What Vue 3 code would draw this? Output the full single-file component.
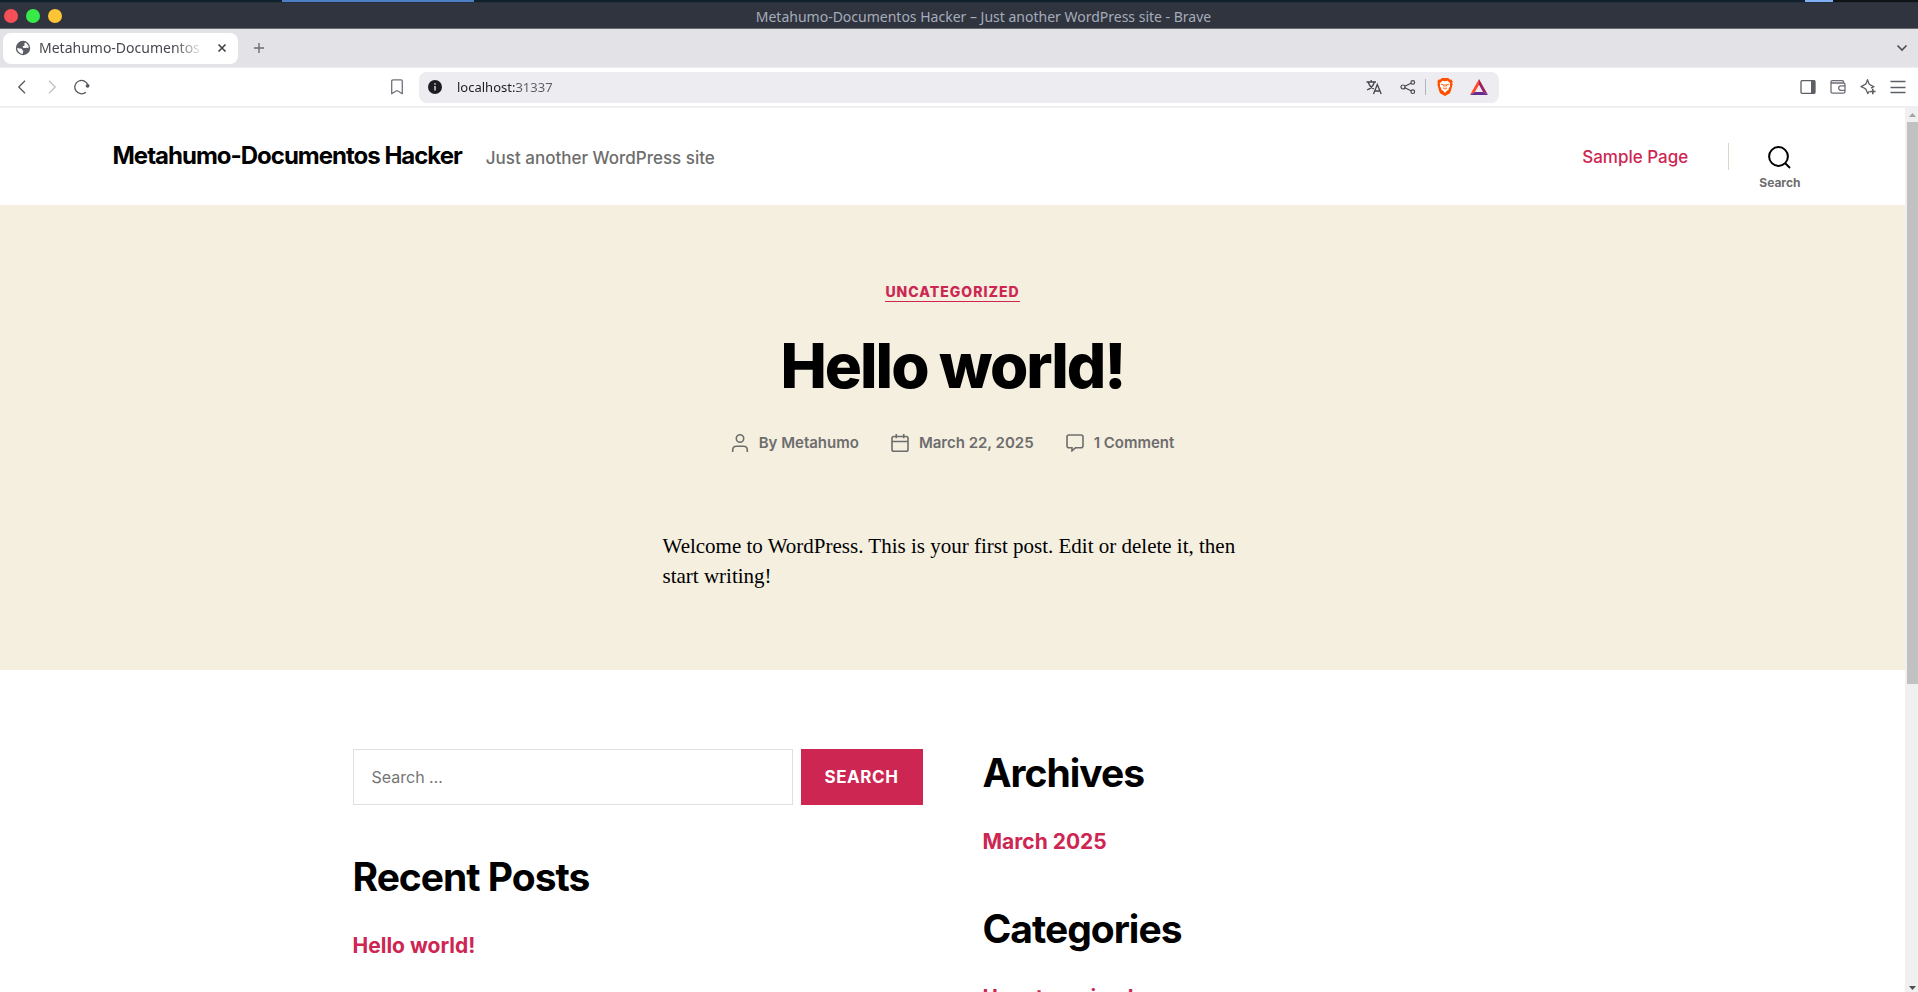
<script setup>
import { ref } from 'vue'

const url = ref('localhost:31337')
const query = ref('')
const meta = [
  { icon: 'user', text: 'By Metahumo' },
  { icon: 'calendar', text: 'March 22, 2025' },
  { icon: 'comment', text: '1 Comment' },
]
const sideWidgets = [
  { title: 'Archives', link: 'March 2025' },
  { title: 'Categories', link: 'Uncategorized' },
]
</script>

<template>
  <div class="window">
    <div class="desk"><i class="desk-active"></i><i class="desk-gap"></i><i class="desk-tag"></i><i class="desk-end"></i></div>
    <header class="titlebar">
      <div class="lights">
        <button class="light red" aria-label="Close window"></button>
        <button class="light green" aria-label="Maximize window"></button>
        <button class="light yellow" aria-label="Minimize window"></button>
      </div>
      <span class="window-title">Metahumo-Documentos Hacker – Just another WordPress site - Brave</span>
    </header>

    <div class="tabstrip">
      <div class="tab">
        <svg width="16" height="16" viewBox="0 0 16 16">
          <circle cx="8" cy="8" r="7.2" fill="#5a5d63" />
          <path d="M2.200 7.700c1.200.1 1.700.7 2.700.8 1.700.1 2.600.4 2.500 1.700.9.300 1.100.8.800 1.400-.3.800-.4 1.300-.2 2.200C4.800 13.800 2.100 11.200 2.200 7.700zM10.100 2.600c1.900.8 3.400 2.700 3.700 4.700-.8.800-1.400.7-2.300.5-1.300-.2-1.700.5-2.900.1C7.600 7.500 7.400 6.500 8.200 6c.5-.3 1.400-.1 1.600-.8-.6-.6-.8-1.700.3-2.600z" fill="#fff" />
        </svg>
        <span class="tab-title">Metahumo-Documentos</span>
        <button class="icon-btn tab-close" aria-label="Close tab">
          <svg width="10" height="10" viewBox="0 0 10 10"><path d="M1.500 1.500l7 7m0-7l-7 7" stroke="#44464c" stroke-width="1.700" /></svg>
        </button>
      </div>
      <button class="icon-btn new-tab" aria-label="New tab">
        <svg width="12" height="12" viewBox="0 0 12 12"><path d="M6 1v10M1 6h10" stroke="#6c6d74" stroke-width="1.400" /></svg>
      </button>
      <button class="icon-btn tab-menu" aria-label="Search tabs">
        <svg width="12" height="8" viewBox="0 0 12 8"><path d="M1.500 1.500L6 6l4.500-4.500" fill="none" stroke="#4c4e56" stroke-width="1.600" /></svg>
      </button>
    </div>

    <nav class="toolbar">
      <div class="tools-left">
        <button class="icon-btn" aria-label="Back">
          <svg width="16" height="16" viewBox="0 0 16 16"><path d="M11 1.800L4.800 8l6.200 6.200" fill="none" stroke="#55585f" stroke-width="1.300" /></svg>
        </button>
        <button class="icon-btn" aria-label="Forward">
          <svg width="16" height="16" viewBox="0 0 16 16"><path d="M5 1.800L11.200 8 5 14.200" fill="none" stroke="#bfc0c4" stroke-width="1.300" /></svg>
        </button>
        <button class="icon-btn" aria-label="Reload">
          <svg width="16" height="16" viewBox="0 0 16 16"><path d="M11.900 13.200A6.700 6.700 0 1 1 14 6.300" fill="none" stroke="#55585f" stroke-width="1.300" /><circle cx="13.600" cy="6.800" r="1.900" fill="#55585f" /></svg>
        </button>
        <button class="icon-btn bookmark" aria-label="Bookmark this page">
          <svg width="16" height="16" viewBox="0 0 16 16"><path d="M2.700 2.200c0-.8.500-1.300 1.300-1.300h8c.8 0 1.300.5 1.300 1.300v12.500L8.900 12q-.9-.7-1.800 0l-4.400 2.700z" fill="none" stroke="#6f727a" stroke-width="1.300" stroke-linejoin="round" /></svg>
        </button>
      </div>
      <div class="address">
        <button class="icon-btn" aria-label="Site information">
          <svg width="16" height="16" viewBox="0 0 16 16"><circle cx="8" cy="8" r="7" fill="#1d1c22" /><path d="M8 7v4.500M8 4.200v1.500" stroke="#d5d5da" stroke-width="1.500" /></svg>
        </button>
        <input v-model="url" class="url" type="text" aria-label="Address" />
        <button class="icon-btn" aria-label="Translate">
          <svg width="16" height="16" viewBox="0 0 16 16" fill="none" stroke="#44464e" stroke-width="1.300"><path d="M.5 3h9.500M5.200 1v2M2.300 3c.6 3 2.800 5.500 5.500 7M8.300 3C7.600 6.300 4.500 9.500 1 11M7.500 15L11.300 5.500 15.200 15M8.800 12h5" /></svg>
        </button>
        <button class="icon-btn share" aria-label="Share">
          <svg width="16" height="16" viewBox="0 0 16 16" fill="none" stroke="#44464e" stroke-width="1.200"><circle cx="3" cy="8" r="2" /><circle cx="12.800" cy="3.400" r="1.800" /><circle cx="12.800" cy="12.700" r="1.800" /><path d="M4.800 7.200L11 4.200M4.800 8.800l6.200 3" /></svg>
        </button>
        <i class="address-sep"></i>
        <button class="icon-btn" aria-label="Brave Shields">
          <svg width="16" height="18" viewBox="0 0 16 18">
            <path d="M4.800 0h6.400l1.600 1.600 1.600-.2 1.300 2-.5 1.500.4 1.600-2 7.200c-.3 1-.8 1.500-1.500 2L8 18l-4.100-2.300c-.7-.5-1.200-1-1.500-2L.4 6.500l.4-1.600-.5-1.500 1.300-2 1.600.2z" fill="#ff5000" />
            <path d="M8 3.300l2.500-.5 2.700 2.500-.4 1.600.4 1-1.500 2.500-.2 1.500-1.700.9L8 14.900l-1.800-2.100-1.700-.9-.2-1.500-1.500-2.500.4-1-.4-1.600 2.700-2.500z" fill="#fff" />
            <path d="M4 6.200l2.600.6-.4 1.500M12 6.200l-2.600.6.4 1.500M8 6v3.400M6 9.800l2 1.300 2-1.300" fill="none" stroke="#ff5000" stroke-width=".9" />
          </svg>
        </button>
        <button class="icon-btn rewards" aria-label="Brave Rewards">
          <svg width="18" height="16" viewBox="0 0 18 16">
            <path d="M9 0L0 16l4.900-3L9 5.800z" fill="#ff4724" />
            <path d="M9 0l9 16-4.900-3L9 5.800z" fill="#9e1f63" />
            <path d="M0 16h18l-4.900-3H4.900z" fill="#662d91" />
          </svg>
        </button>
      </div>
      <div class="tools-right">
        <button class="icon-btn" aria-label="Sidebar">
          <svg width="16" height="16" viewBox="0 0 16 16"><rect x="1" y="1.700" width="14" height="12.600" rx="1" fill="none" stroke="#5c5f66" stroke-width="1.300" /><path d="M11 1.500h4v13h-4z" fill="#5c5f66" /></svg>
        </button>
        <button class="icon-btn" aria-label="Wallet">
          <svg width="16" height="16" viewBox="0 0 16 16" fill="none" stroke="#6b6e75" stroke-width="1.300"><path d="M13.500 4V2.800c0-.7-.4-1.200-1.200-1.200H2.500C1.500 1.600 1 2.200 1 3v9.500c0 1 .7 1.700 1.700 1.700h10.600c1 0 1.700-.7 1.700-1.700V5.700C15 4.600 14.400 4 13.300 4H2.500C1.500 4 1 3.700 1 3M15 6.800h-4a2.300 2.300 0 0 0 0 4.600h4" /></svg>
        </button>
        <button class="icon-btn" aria-label="Leo AI">
          <svg width="16" height="16" viewBox="0 0 16 16" fill="none" stroke="#5c5f66" stroke-width="1.300" stroke-linejoin="round"><path d="M9.500 12.200L7.800 14.500 6 10.500C5.600 9.700 5 9.300 1 7.600 5 5.900 5.600 5.500 6.200 4.400L7.500.7l1.400 3.700c.4 1 1 1.500 5 3.200l-2.900 1.500" /><path d="M12.800 9.700v5.600M10 12.500h5.600" stroke-width="1.600" /></svg>
        </button>
        <button class="icon-btn" aria-label="Menu">
          <svg width="16" height="16" viewBox="0 0 16 16"><path d="M.5 2.500h15M.5 8.500h15M.5 13.500h15" stroke="#5c5f66" stroke-width="1.300" /></svg>
        </button>
      </div>
    </nav>

    <div class="viewport">
      <div class="page">
        <header class="site-header">
          <div class="header-inner">
            <div class="titles">
              <a class="site-title" href="#">Metahumo-Documentos Hacker</a>
              <span class="tagline">Just another WordPress site</span>
            </div>
            <div class="header-nav">
              <a class="nav-link" href="#">Sample Page</a>
              <i class="nav-sep"></i>
              <button class="search-toggle">
                <svg width="23" height="23" viewBox="0 0 23 23" fill="none" stroke="#000" stroke-width="2"><circle cx="10.500" cy="10.500" r="9.400" /><path d="M17 17l5 5" /></svg>
                <span>Search</span>
              </button>
            </div>
          </div>
        </header>

        <article class="post">
          <a class="category" href="#">Uncategorized</a>
          <h1>Hello world!</h1>
          <ul class="meta">
            <li v-for="m in meta" :key="m.icon">
              <svg v-if="m.icon === 'user'" width="18" height="18" viewBox="0 0 18 18"><circle cx="9" cy="4.500" r="3.700" /><path d="M1.700 18v-2c0-2.200 1.500-3.700 3.700-3.700h7.200c2.200 0 3.700 1.500 3.700 3.700v2" /></svg>
              <svg v-else-if="m.icon === 'calendar'" width="18" height="18" viewBox="0 0 18 18"><rect x="1" y="2.500" width="16" height="14.700" rx="1.800" /><path d="M1 7.500h16M5.300 0v4.200M12.700 0v4.200" /></svg>
              <svg v-else width="18" height="18" viewBox="0 0 18 18"><path d="M3 1h12c1.200 0 2 .8 2 2v8.800c0 1.200-.8 2-2 2H9.500L6 16.800v-3H3c-1.200 0-2-.8-2-2V3c0-1.200.8-2 2-2z" /></svg>
              <a href="#">{{ m.text }}</a>
            </li>
          </ul>
          <p>Welcome to WordPress. This is your first post. Edit or delete it, then start writing!</p>
        </article>

        <div class="widgets">
          <div class="column">
            <form class="search-form" @submit.prevent>
              <input v-model="query" type="search" placeholder="Search …" aria-label="Search for" />
              <button type="submit">Search</button>
            </form>
            <section>
              <h2>Recent Posts</h2>
              <a href="#">Hello world!</a>
            </section>
          </div>
          <div class="column">
            <section v-for="w in sideWidgets" :key="w.title">
              <h2>{{ w.title }}</h2>
              <a href="#">{{ w.link }}</a>
            </section>
          </div>
        </div>
      </div>
      <div class="scrollbar">
        <svg width="11" height="14" viewBox="0 0 11 14"><path d="M2 9l3.500-4L9 9z" fill="#a3a3a3" /></svg>
        <i class="thumb"></i>
        <i class="track"></i>
        <svg width="11" height="14" viewBox="0 0 11 14"><path d="M2 8l3.500 4L9 8z" fill="#505050" /></svg>
      </div>
    </div>
  </div>
</template>

<style>
body { margin: 0; overflow: hidden; }
</style>

<style scoped>
* { box-sizing: border-box; }
.window { height: 100vh; display: flex; flex-direction: column; background: #fff; font-family: "Noto Sans", sans-serif; overflow: hidden; }
button { font: inherit; color: inherit; border: 0; padding: 0; background: none; cursor: pointer; }
a { color: #cd2653; text-decoration: none; }
svg { display: block; flex: none; }

.desk { height: 3px; flex: none; display: flex; background: #12202e; border-bottom: 1px solid #26303d; }
.desk-active { width: 10%; margin-left: 282px; background: #4d7fc4; }
.desk-gap { flex: 1; }
.desk-tag { width: 28px; background: #7fb0f5; }
.desk-end { width: 85px; background: #101216; }

.titlebar { height: 26px; flex: none; display: grid; grid-template-columns: 1fr auto 1fr; align-items: center; padding: 0 4px; background: #30343f; border-bottom: 1px solid #6b6a74; }
.lights { display: flex; gap: 8px; }
.light { width: 14px; height: 14px; border-radius: 50%; }
.red { background: #f74f58; }
.green { background: #38ea49; }
.yellow { background: #fdc536; }
.window-title { grid-column: 2; padding: 2px 0 0 49px; font-size: 14px; line-height: 20px; color: #a5adbb; white-space: nowrap; }

.tabstrip { height: 39px; flex: none; display: flex; align-items: center; padding: 0 10px 0 3px; background: #e3e2e7; border-bottom: 1px solid #eeedf0; }
.tab { display: flex; align-items: center; width: 235px; height: 31px; padding: 0 10px 0 12px; border-radius: 8px; background: #fff; }
.tab-title { flex: 1; min-width: 0; margin: 0 12px 0 8px; white-space: nowrap; font-size: 14px; line-height: 20px; color: #46484f; mask-image: linear-gradient(to right, #000 82%, transparent); }
.icon-btn { display: flex; align-items: center; justify-content: center; flex: none; }
.tab-close { width: 12px; height: 16px; }
.new-tab { margin-left: 15px; }
.tab-menu { margin-left: auto; }

.toolbar { height: 40px; flex: none; display: grid; grid-template-columns: minmax(0, 1fr) minmax(0, 1080px) minmax(0, 1fr); align-items: center; border-bottom: 2px solid #efeff1; }
.tools-left, .tools-right { display: flex; align-items: center; gap: 14px; }
.tools-left { padding: 0 14px; }
.tools-right { justify-content: flex-end; padding-right: 12px; }
.bookmark { margin-left: auto; }
.address { height: 31px; display: flex; align-items: center; padding: 0 11px 0 8px; border-radius: 8px; background: #ededf1; }
.url { flex: 1; min-width: 0; margin-left: 14px; padding: 0; border: 0; outline: 0; font: 13px/20px "Noto Sans", sans-serif; color: transparent; caret-color: #1d1c22; background: linear-gradient(to right, #1d1c22 61px, #5c5b66 61px) text; }
.share { margin-left: 18px; }
.address-sep { width: 1px; height: 16px; margin: 0 11px 0 9px; background: #b3b3ba; }
.rewards { margin-left: 17px; }

.viewport { flex: 1; min-height: 0; display: flex; }
.page { flex: 1; min-width: 0; overflow: hidden; font-family: Inter, sans-serif; }
.scrollbar { width: 13px; display: flex; flex-direction: column; padding-left: 2px; background: #f0f0f0; }
.thumb { flex: 562; background: #c1c1c1; }
.track { flex: 294; }

.site-header { padding: 0 40px; }
.header-inner { max-width: 1680px; height: 97px; margin: 0 auto; display: flex; justify-content: space-between; align-items: center; }
.titles { display: flex; align-items: baseline; gap: 24px; padding-bottom: 2px; }
.site-title { font-size: 24px; line-height: 30px; font-weight: 700; letter-spacing: -1px; color: #000; }
.tagline { font-size: 17px; font-weight: 500; color: #6d6d6d; }
.header-nav { display: flex; align-items: center; margin-right: -8px; }
.nav-link { font-size: 17px; line-height: 24px; font-weight: 500; }
.nav-sep { width: 1px; height: 27px; margin: 0 30px 0 40px; background: #dcd7ca; }
.search-toggle { display: flex; flex-direction: column; align-items: center; gap: 6px; padding-top: 23px; font-size: 12px; line-height: 16px; font-weight: 700; color: #6d6d6d; }

.post { display: flex; flex-direction: column; align-items: center; padding: 77px 20px 79px; background: #f5efe0; }
.category { font-size: 14px; line-height: 19px; font-weight: 800; letter-spacing: 1px; text-transform: uppercase; border-bottom: 1px solid #cd2653; }
h1 { margin: 29px 0 0; font-size: 62px; line-height: 70px; font-weight: 800; letter-spacing: -2px; color: #000; }
.meta { display: flex; flex-wrap: wrap; gap: 32px; margin: 30px 0 0; padding: 0; list-style: none; }
.meta li { display: flex; align-items: center; gap: 10px; }
.meta svg { fill: none; stroke: #6d6d6d; stroke-width: 1.6; }
.meta a { font-size: 15px; line-height: 24px; font-weight: 600; color: #6d6d6d; }
.post p { width: 100%; max-width: 580px; margin: 76px 0 0; font: 21px/30px "Liberation Serif", serif; color: #000; }

.widgets { display: flex; gap: 60px; max-width: 1200px; margin: 0 auto; padding-top: 79px; }
.column { flex: 1; display: flex; flex-direction: column; gap: 48px; }
.search-form { display: flex; gap: 8px; height: 56px; }
.search-form input { flex: 1; min-width: 0; padding: 0 18px; border: 1px solid #dedfdf; border-radius: 0; background: #fff; font: 16px/24px Inter, sans-serif; color: #000; appearance: none; outline: 0; }
.search-form input::placeholder { color: #757575; }
.search-form button { padding: 0 24px; background: #cd2653; color: #fff; font-size: 17px; font-weight: 700; letter-spacing: 0.0333em; text-transform: uppercase; }
h2 { margin: 0 0 30px; font-size: 39px; line-height: 48px; font-weight: 700; letter-spacing: -1px; color: #000; }
section a { display: block; font-size: 21px; line-height: 30px; font-weight: 700; }
</style>
